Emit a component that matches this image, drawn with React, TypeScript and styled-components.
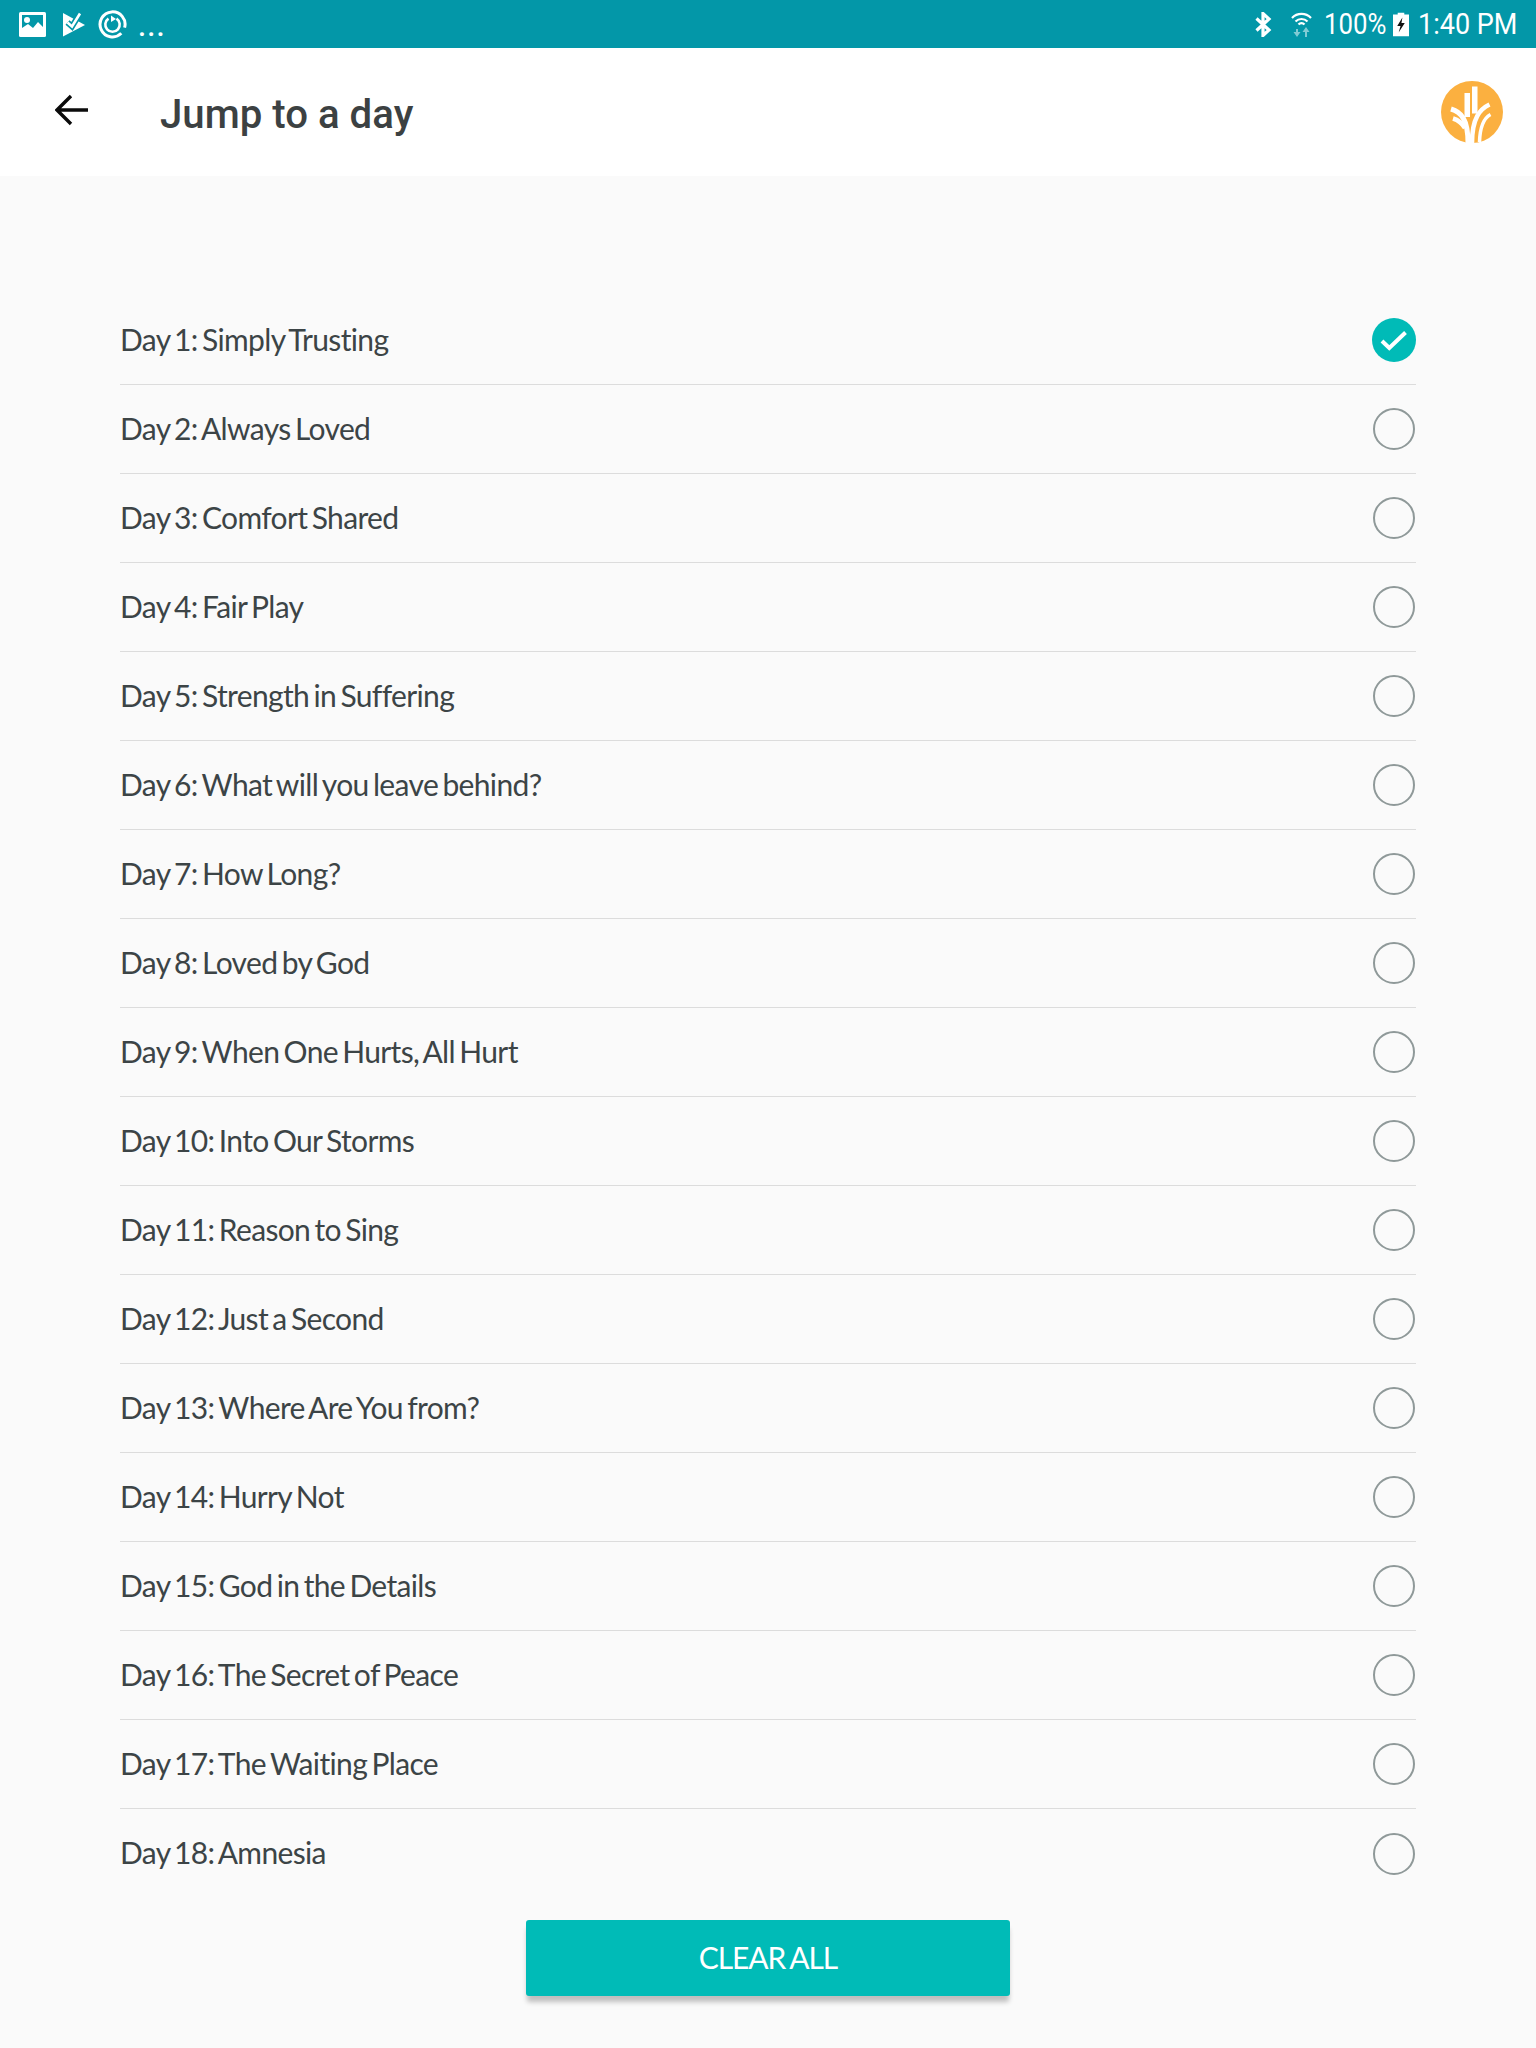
import { createGlobalStyle } from 'styled-components'
import styled from 'styled-components'

const GlobalStyle = createGlobalStyle`
    html, body {
        margin: 0;
        padding: 0;
        background-color: #fafafa;
    }
`

const Page = styled.div`
    width: 1536px;
    height: 2048px;
    background-color: #fafafa;
    display: flex;
    flex-direction: column;
    overflow: hidden;
`

const StatusBar = styled.div`
    height: 48px;
    flex-shrink: 0;
    background-color: #0397a8;
    color: #fff;
    display: flex;
    align-items: center;
    justify-content: space-between;
    padding: 0 22px 0 19px;
    font-family: Roboto, sans-serif;
    font-size: 30px;
`

const StatusGroup = styled.div`
    display: flex;
    align-items: center;
`

const StatusIcon = styled.svg<{ $gap: number }>`
    display: block;
    margin-right: ${(p) => p.$gap}px;
`

const Dots = styled.span`
    font-size: 29px;
    font-weight: 500;
    letter-spacing: 1.2px;
    line-height: 48px;
    transform: translateY(2px);
`

const StatusText = styled.span<{ $gap: number; $width: number; $squeeze: number }>`
    display: inline-block;
    width: ${(p) => p.$width}px;
    margin-right: ${(p) => p.$gap}px;
    line-height: 48px;
    font-weight: 400;
    white-space: nowrap;
    transform: scaleX(${(p) => p.$squeeze});
    transform-origin: left center;
`

const AppBar = styled.div`
    height: 128px;
    flex-shrink: 0;
    background-color: #fff;
    display: flex;
    align-items: center;
    padding: 0 33px 0 55px;
`

const BackIcon = styled.svg`
    display: block;
    margin-right: 71px;
    margin-top: -5px;
`

const Title = styled.h1`
    margin: 0;
    padding-top: 4px;
    flex: 1;
    font-family: Roboto, sans-serif;
    font-size: 40.2px;
    font-weight: 500;
    color: #3c4142;
`

const DayList = styled.ul`
    list-style: none;
    margin: 0;
    padding: 120px 120px 0;
`

const DayRow = styled.li`
    height: 89px;
    box-sizing: border-box;
    display: flex;
    align-items: center;
    justify-content: space-between;
    border-bottom: 1px solid #dcdcdc;

    &:last-child {
        border-bottom: none;
    }
`

const DayName = styled.span`
    padding-bottom: 3px;
    font-family: Lato, sans-serif;
    font-size: 30px;
    color: #3c4446;
    letter-spacing: -0.65px;
    word-spacing: -2.7px;
`

const CheckCircle = styled.span<{ $done: boolean }>`
    width: ${(p) => (p.$done ? 44 : 42)}px;
    height: ${(p) => (p.$done ? 44 : 42)}px;
    margin-right: ${(p) => (p.$done ? 0 : 1)}px;
    box-sizing: border-box;
    border-radius: 50%;
    display: flex;
    flex-shrink: 0;
    background-color: ${(p) => (p.$done ? '#00bbb7' : 'transparent')};
    border: ${(p) => (p.$done ? 'none' : '2px solid #8f9999')};
`

const ButtonRow = styled.div`
    display: flex;
    justify-content: center;
    padding-top: 22px;
`

const ClearButton = styled.button`
    width: 484px;
    height: 76px;
    padding: 0 0 3px;
    border: none;
    border-radius: 3px;
    background-color: #00bbb7;
    color: #fff;
    font-family: Lato, sans-serif;
    font-size: 30px;
    letter-spacing: -1.1px;
    word-spacing: -1.5px;
    box-shadow: 0 7px 5px -1px rgba(0, 0, 0, 0.24);
`

const days = [
    'Day 1: Simply Trusting',
    'Day 2: Always Loved',
    'Day 3: Comfort Shared',
    'Day 4: Fair Play',
    'Day 5: Strength in Suffering',
    'Day 6: What will you leave behind?',
    'Day 7: How Long?',
    'Day 8: Loved by God',
    'Day 9: When One Hurts, All Hurt',
    'Day 10: Into Our Storms',
    'Day 11: Reason to Sing',
    'Day 12: Just a Second',
    'Day 13: Where Are You from?',
    'Day 14: Hurry Not',
    'Day 15: God in the Details',
    'Day 16: The Secret of Peace',
    'Day 17: The Waiting Place',
    'Day 18: Amnesia',
]

const Logo = () => (
    <svg width="62" height="62" viewBox="0 0 62 62">
        <circle cx="31" cy="31" r="31" fill="#fbb040" />
        <g fill="#fff">
            <rect x="23.5" y="12" width="5.5" height="24" />
            <rect x="31" y="5.5" width="5.5" height="27" />
        </g>
        <g fill="none" stroke="#fff">
            <path d="M10 28 C20 31 27 38 27 62" strokeWidth="5" />
            <path d="M12 37.5 C17 39 21 42 24 47" strokeWidth="4.5" />
            <path d="M48.5 23.5 C39 28 31 37 31 62" strokeWidth="4.5" />
            <path d="M49.5 33.5 C43 37 39 46 38.5 61" strokeWidth="3.5" />
        </g>
    </svg>
)

const App = () => (
    <Page>
        <GlobalStyle />
        <StatusBar>
            <StatusGroup>
                <StatusIcon $gap={16} width="27" height="25" viewBox="0 0 27 25">
                    <rect width="27" height="25" rx="1.5" fill="#fff" />
                    <rect x="3" y="3" width="21" height="16" fill="#0397a8" />
                    <circle cx="8" cy="8" r="3" fill="#fff" />
                    <path d="M3 19 L3 16 L9 12 L14 16 L19 10 L24 15 L24 19 Z" fill="#fff" />
                </StatusIcon>
                <StatusIcon $gap={12} width="24" height="25" viewBox="0 0 24 25">
                    <path d="M1 1 L23 13 L1 24.5 Z" fill="#fff" />
                    <path d="M5.5 10.5 L10 14.5 L18 1.5" fill="none" stroke="#0397a8" strokeWidth="6" />
                    <path d="M5.5 10.5 L10 14.5 L18 1.5" fill="none" stroke="#fff" strokeWidth="2.6" />
                </StatusIcon>
                <StatusIcon $gap={11} width="29" height="29" viewBox="0 0 29 29">
                    <path d="M23.3 23.3 A12.5 12.5 0 1 1 26.6 17.7" fill="none" stroke="#fff" strokeWidth="3" />
                    <path d="M10.5 8.6 A7.2 7.2 0 1 0 18.5 8.6" fill="none" stroke="#fff" strokeWidth="2.6" />
                    <path d="M13 5.5 L13 12 L18 9 Z" fill="#fff" />
                </StatusIcon>
                <Dots>...</Dots>
            </StatusGroup>
            <StatusGroup>
                <StatusIcon $gap={19} width="17" height="25" viewBox="0 0 17 25">
                    <path d="M1.5 6.5 L14 18 L8 23.5 L8 1.5 L14 7 L1.5 18.5" fill="none" stroke="#fff" strokeWidth="3.2" />
                </StatusIcon>
                <StatusIcon $gap={12} width="21" height="25" viewBox="0 0 21 25">
                    <g fill="none" stroke="#fff" strokeWidth="2.2">
                        <path d="M1 6 A13 13 0 0 1 20 6" />
                        <path d="M4.5 9.5 A8.5 8.5 0 0 1 16.5 9.5" />
                        <path d="M7.5 12.5 A4 4 0 0 1 13.5 12.5" />
                    </g>
                    <path d="M5 17 L5 20 L2.5 20 L6 25 L9.5 20 L7 20 L7 17 Z M14 25 L14 20 L11.5 20 L15 15 L18.5 20 L16 20 L16 25 Z" fill="#fff" fillOpacity="0.5" />
                </StatusIcon>
                <StatusText $gap={8} $width={61} $squeeze={0.86}>100%</StatusText>
                <StatusIcon $gap={9} width="16" height="25" viewBox="0 0 17 25">
                    <path d="M5 0 H12 V2 H17 V25 H0 V2 H5 Z" fill="#fff" />
                    <path d="M10 5 L4.5 14 L8 14 L6 21 L12.5 11 L9 11 Z" fill="#111" />
                </StatusIcon>
                <StatusText $gap={0} $width={96} $squeeze={0.9}>1:40 PM</StatusText>
            </StatusGroup>
        </StatusBar>
        <AppBar>
            <BackIcon width="34" height="32" viewBox="0 0 34 32">
                <path d="M33 16 H3 M16 2 L2 16 L16 30" fill="none" stroke="#0b0b0b" strokeWidth="3.4" />
            </BackIcon>
            <Title>Jump to a day</Title>
            <Logo />
        </AppBar>
        <DayList>
            {days.map((day, i) => (
                <DayRow key={day}>
                    <DayName>{day}</DayName>
                    <CheckCircle $done={i === 0}>
                        {i === 0 && (
                            <svg width="44" height="44" viewBox="0 0 44 44">
                                <path d="M10 23 L17.3 30 L33.5 14.5" fill="none" stroke="#fff" strokeWidth="4" />
                            </svg>
                        )}
                    </CheckCircle>
                </DayRow>
            ))}
        </DayList>
        <ButtonRow>
            <ClearButton>CLEAR ALL</ClearButton>
        </ButtonRow>
    </Page>
)

export default App
